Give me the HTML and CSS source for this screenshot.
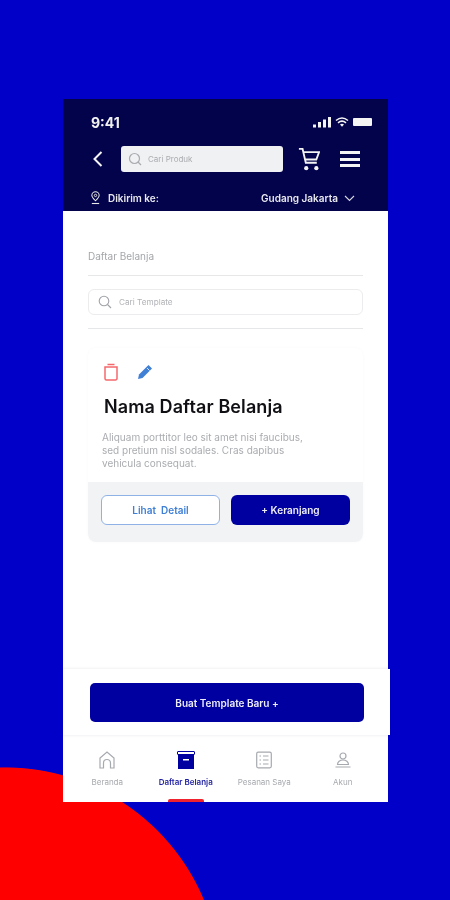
FILE: index.html
```html
<!DOCTYPE html>
<html lang="id">
<head>
<meta charset="utf-8">
<title>Daftar Belanja</title>
<link rel="stylesheet" href="styles.css">
</head>
<body>
<div class="phone">
  <header class="header">
    <div class="status">
      <span class="time">9:41</span>
      <div class="status-icons">
        <svg width="18" height="11" viewBox="0 0 18 11"><rect x="0" y="7.500" width="3" height="3" fill="#f4f4f4"/><rect x="5" y="5" width="3" height="5.500" fill="#f4f4f4"/><rect x="10" y="2.500" width="3" height="8" fill="#f4f4f4"/><rect x="15" y="0" width="3" height="10.500" fill="#f4f4f4"/></svg>
        <svg width="14" height="10" viewBox="0 0 14 10"><path d="M1 3.500Q7-1.500 13 3.500M3 5.800Q7 2.500 11 5.800" fill="none" stroke="#f4f4f4" stroke-width="1.600"/><path d="M5 7.600Q7 6 9 7.600L7 9.800Z" fill="#f4f4f4"/></svg>
        <svg width="20" height="8" viewBox="0 0 20 8"><rect x="0" y="0" width="19" height="8" rx="1" fill="#f4f4f4"/></svg>
      </div>
    </div>
    <div class="nav">
      <svg class="back" width="11" height="18" viewBox="0 0 11 18"><path d="M9.500 2L2.500 9l7 7" fill="none" stroke="#f4f4f4" stroke-width="2"/></svg>
      <div class="top-search">
        <svg width="14" height="14" viewBox="0 0 14 14"><circle cx="6.500" cy="6.500" r="5" fill="none" stroke="#a8acb0" stroke-width="1.200"/><path d="M10 10l3 3" stroke="#a8acb0" stroke-width="1.200"/></svg>
        <span>Cari Produk</span>
      </div>
      <svg class="cart" width="22" height="25" viewBox="0 0 24 26"><path d="M1 1.500h4l3.500 15h12M6 5h17l-3 8H8" fill="none" stroke="#f4f4f4" stroke-width="2"/><circle cx="9" cy="22.500" r="2.300" fill="#f4f4f4"/><circle cx="20" cy="22.500" r="2.300" fill="#f4f4f4"/></svg>
      <div class="burger"><i></i><i></i><i></i></div>
    </div>
    <div class="location">
      <svg class="pin" width="11" height="14" viewBox="0 0 12 15"><path d="M6 10.500C3.500 8 2 6.500 2 4.700a4 4 0 0 1 8 0C10 6.500 8.500 8 6 10.500Z" fill="none" stroke="#e8e8e8" stroke-width="1.100"/><circle cx="6" cy="4.700" r="1.300" fill="none" stroke="#e8e8e8"/><path d="M2 13.500h8" stroke="#e8e8e8" stroke-width="1.200"/></svg>
      <span class="loc-label">Dikirim ke:</span>
      <span class="loc-value">Gudang Jakarta</span>
      <svg class="loc-chevron" width="11" height="7" viewBox="0 0 11 7"><path d="M1 1l4.500 4.500L10 1" fill="none" stroke="#d8d8e0" stroke-width="1.100"/></svg>
    </div>
  </header>
  <main class="content">
    <h1 class="page-title">Daftar Belanja</h1>
    <hr class="rule">
    <div class="template-search">
      <svg width="14" height="14" viewBox="0 0 14 14"><circle cx="6" cy="6" r="4.800" fill="none" stroke="#a0a3a8" stroke-width="1.100"/><path d="M9.500 9.500l3.500 3.500" stroke="#a0a3a8" stroke-width="1.100"/></svg>
      <span>Cari Template</span>
    </div>
    <hr class="rule rule-lower">
    <article class="card">
      <div class="card-body">
        <div class="card-actions">
          <svg width="16" height="19" viewBox="0 0 16 19"><path d="M2 5h12v11.500a1.500 1.500 0 0 1-1.500 1.500h-9A1.500 1.500 0 0 1 2 16.500ZM4.500 2.500h7" fill="none" stroke="#f4686c" stroke-width="1.500"/></svg>
          <svg width="17" height="17" viewBox="0 0 17 17"><path d="M1 16l1-4.500L11.500 2l3.500 3.500L5.500 15Z" fill="#3f7fd6"/><path d="M10 5l2.500 2.500" stroke="#fff" stroke-width="0.800"/></svg>
        </div>
        <h2 class="card-title">Nama Daftar Belanja</h2>
        <p class="card-text">Aliquam porttitor leo sit amet nisi faucibus, sed pretium nisl sodales. Cras dapibus vehicula consequat.</p>
      </div>
      <div class="card-footer">
        <button class="btn btn-outline">Lihat&nbsp; Detail</button>
        <button class="btn btn-solid">+ Keranjang</button>
      </div>
    </article>
  </main>
  <div class="create-bar">
    <button class="create-btn">Buat Template Baru +</button>
  </div>
  <nav class="tabs">
    <div class="tab">
      <svg width="16" height="18" viewBox="0 0 16 18"><path d="M1 17V7l7-6 7 6v10h-3.500v-5a3.500 3.500 0 0 0-7 0v5Z" fill="none" stroke="#a6a9ae" stroke-width="1.200"/></svg>
      <span>Beranda</span>
    </div>
    <div class="tab tab-active">
      <svg width="18" height="18" viewBox="0 0 18 18"><rect x="1" y="4" width="16" height="14" fill="#0000a0"/><rect x="0.500" y="0.500" width="17" height="3" rx="0.500" fill="none" stroke="#0000a0"/><rect x="6" y="8" width="6" height="1.500" fill="#fff"/></svg>
      <span>Daftar Belanja</span>
      <i class="tab-mark"></i>
    </div>
    <div class="tab">
      <svg width="16" height="17" viewBox="0 0 16 17"><rect x="0.700" y="0.700" width="14.600" height="15.600" rx="1.500" fill="none" stroke="#a6a9ae" stroke-width="1.200"/><path d="M7 4.500h5.500M7 8.500h5.500M7 12.500h5.500M3.500 4.500h1.500M3.500 8.500h1.500M3.500 12.500h1.500" stroke="#a6a9ae" stroke-width="1.200"/></svg>
      <span>Pesanan Saya</span>
    </div>
    <div class="tab">
      <svg width="16" height="16" viewBox="0 0 16 16"><circle cx="8" cy="4" r="3" fill="none" stroke="#a6a9ae" stroke-width="1.200"/><path d="M2.500 12.500a5.500 4.500 0 0 1 11 0ZM0.500 15h15" fill="none" stroke="#a6a9ae" stroke-width="1.200"/></svg>
      <span>Akun</span>
    </div>
  </nav>
</div>
</body>
</html>
```

FILE: styles.css
```css
* { box-sizing: border-box; }
html, body { margin: 0; height: 900px; }
body {
  background: radial-gradient(circle 216px at 5px 983px, #fe0000 99.6%, rgba(254, 0, 0, 0) 100%), #0000c8;
  padding: 99px 0 0 63px;
  overflow: hidden;
  font-family: Inter, "Liberation Sans", sans-serif;
}
.phone {
  width: 325px;
  height: 703px;
  background: #fff;
  display: flex;
  flex-direction: column;
  filter: blur(0.45px);
}
.header {
  background: #03034c;
  height: 112px;
  padding: 13px 15px 0 28px;
  display: flex;
  flex-direction: column;
  flex: none;
}
.status { display: flex; align-items: center; justify-content: space-between; height: 20px; }
.time { color: #f0f0f0; font-size: 14px; font-weight: 700; }
.status-icons { display: flex; align-items: center; gap: 4px; }
.nav { display: flex; align-items: center; margin: 13px 0 0 -28px; padding-left: 29px; height: 28px; }
.back { flex: none; }
.top-search {
  margin-left: 18px;
  width: 162px;
  height: 26px;
  background: #f0f1f2;
  border-radius: 3px;
  display: flex;
  align-items: center;
  gap: 6px;
  padding: 0 7px;
  color: #a9acb0;
  font-size: 8px;
}
.cart { margin-left: 15px; flex: none; }
.burger { margin-left: 20px; width: 20px; display: flex; flex-direction: column; gap: 3.500px; }
.burger i { display: block; height: 3px; background: #f4f4f4; }
.location { display: flex; align-items: center; margin-top: 18px; color: #e8e8ee; font-size: 10px; font-weight: 600; }
.pin { margin-left: -1px; }
.loc-label { margin-left: 7px; }
.loc-value { margin-left: auto; margin-right: 6px; }
.loc-chevron { margin-right: 18px; }
.content { flex: 1; padding: 0 25px; min-height: 0; }
.page-title { margin: 38px 0 0; font-size: 10px; font-weight: 400; line-height: 14px; color: #a4a6aa; }
.rule { border: 0; height: 1px; background: #e6e7e9; margin: 12px 0 0; }
.rule-lower { margin-top: 13px; }
.template-search {
  margin-top: 13px;
  height: 26px;
  border: 1px solid #ececee;
  border-radius: 6px;
  display: flex;
  align-items: center;
  gap: 7px;
  padding: 0 9px;
  font-size: 8.200px;
  color: #b0b2b6;
}
.card {
  margin-top: 19px;
  height: 194px;
  border-radius: 8px;
  background: #fff;
  box-shadow: 0 0 3px rgba(20, 20, 60, 0.03);
  overflow: hidden;
  display: flex;
  flex-direction: column;
}
.card-body { height: 134px; padding: 14px 14px 0; }
.card-actions { display: flex; align-items: center; gap: 18px; margin-left: 1px; }
.card-title { margin: 15px 0 0 2px; font-size: 18px; font-weight: 600; line-height: 22px; letter-spacing: 0.100px; color: #101014; }
.card-text { margin: 13px 0 0; width: 210px; font-size: 10px; line-height: 13px; color: #aaacb0; }
.card-footer {
  flex: 1;
  background: #f2f3f5;
  display: flex;
  gap: 11px;
  padding: 13px 13px 0;
  align-items: flex-start;
}
.btn { width: 119px; height: 30px; border-radius: 6px; font: 600 10px Inter, "Liberation Sans", sans-serif; padding: 0; }
.btn-outline { background: #fff; border: 1px solid #8fb2e6; color: #3f7fd6; }
.btn-solid { background: #0000a0; border: 0; color: #eeeef8; }
.create-bar {
  flex: none;
  width: 327px;
  height: 66px;
  background: #fff;
  box-shadow: 0 0 3px rgba(20, 20, 60, 0.10);
  padding: 14px 25px 0 27px;
}
.create-btn { width: 274px; height: 39px; border: 0; border-radius: 5px; background: #0000a0; color: #ececf8; font: 600 10px Inter, "Liberation Sans", sans-serif; }
.tabs { flex: none; height: 67px; display: flex; padding: 0 6px 0 5px; }
.tab {
  position: relative;
  flex: 1;
  display: flex;
  flex-direction: column;
  align-items: center;
  padding-top: 16px;
  gap: 8px;
  font-size: 8px;
  color: #a6a9ae;
}
.tab > svg { height: 18px; }
.tab-active { color: #1f1fa0; font-weight: 600; }
.tab-mark {
  position: absolute;
  bottom: 0;
  left: 50%;
  width: 36px;
  margin-left: -18px;
  height: 3px;
  border-radius: 2px 2px 0 0;
  background: #f0222e;
}
```
